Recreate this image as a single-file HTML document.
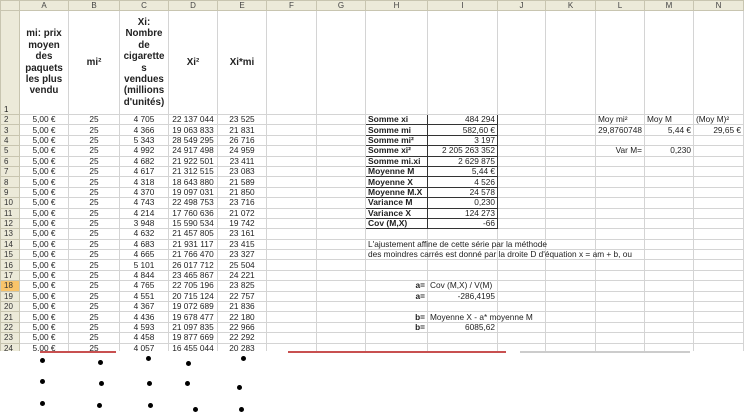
<!DOCTYPE html>
<html><head><meta charset="utf-8"><style>
*{margin:0;padding:0;box-sizing:border-box}
body{width:751px;height:409px;background:#fff;position:relative;overflow:hidden;font-family:"Liberation Sans",Arial,sans-serif;color:#222}
.wrap{position:absolute;left:0;top:0;width:751px;height:351px;overflow:hidden}
table{border-collapse:collapse;table-layout:fixed;width:743px;font-size:8.3px}
td{border:1px solid #d4d4d4;height:10.4px;line-height:9px;padding:0 2px;white-space:nowrap;overflow:visible;text-align:center}
tr.h td{background:#ecead9;border-color:#c8c5b0;height:9px;color:#444;font-size:8px}
td.rh{background:#ecead9;border-color:#c8c5b0;text-align:left;padding-left:3px;color:#333;font-size:8px}
td.sel{background:#f9c46a;}
tr.r1 td{height:104px;font-weight:bold;font-size:9.8px;line-height:11.4px;white-space:normal;vertical-align:middle;color:#222}
tr.r1 td.rh{vertical-align:bottom;font-weight:normal;font-size:8px;line-height:9px}
.r{text-align:right}.l{text-align:left}
.bx{border:1.5px solid #333!important;font-weight:bold;text-align:left;font-size:8.5px}
.bv{border:1.5px solid #333!important;text-align:right}
.dot{position:absolute;width:5px;height:5px;border-radius:50%;background:#000}
.line{position:absolute;height:2px}
</style></head><body>
<div class="wrap">
<table>
<colgroup><col style="width:19px"><col style="width:49px"><col style="width:51px"><col style="width:49px"><col style="width:49px"><col style="width:49px"><col style="width:50px"><col style="width:49px"><col style="width:62px"><col style="width:70px"><col style="width:48px"><col style="width:50px"><col style="width:49px"><col style="width:49px"><col style="width:50px"></colgroup>
<tr class="h"><td class="rh"></td><td>A</td><td>B</td><td>C</td><td>D</td><td>E</td><td>F</td><td>G</td><td>H</td><td>I</td><td>J</td><td>K</td><td>L</td><td>M</td><td>N</td></tr>
<tr class="r1"><td class="rh">1</td><td>mi: prix moyen des paquets les plus vendu</td><td>mi²</td><td>Xi: Nombre de cigarette s vendues (millions d'unités)</td><td>Xi²</td><td>Xi*mi</td><td></td><td></td><td></td><td></td><td></td><td></td><td></td><td></td><td></td></tr>
<tr><td class="rh">2</td><td>5,00 €</td><td>25</td><td>4 705</td><td>22 137 044</td><td>23 525</td><td></td><td></td><td class="bx">Somme xi</td><td class="bv">484 294</td><td></td><td></td><td class="l">Moy mi²</td><td class="l">Moy M</td><td class="l">(Moy M)²</td></tr>
<tr><td class="rh">3</td><td>5,00 €</td><td>25</td><td>4 366</td><td>19 063 833</td><td>21 831</td><td></td><td></td><td class="bx">Somme mi</td><td class="bv">582,60 €</td><td></td><td></td><td class="r">29,8760748</td><td class="r">5,44 €</td><td class="r">29,65 €</td></tr>
<tr><td class="rh">4</td><td>5,00 €</td><td>25</td><td>5 343</td><td>28 549 295</td><td>26 716</td><td></td><td></td><td class="bx">Somme mi²</td><td class="bv">3 197</td><td></td><td></td><td></td><td></td><td></td></tr>
<tr><td class="rh">5</td><td>5,00 €</td><td>25</td><td>4 992</td><td>24 917 498</td><td>24 959</td><td></td><td></td><td class="bx">Somme xi²</td><td class="bv">2 205 263 352</td><td></td><td></td><td class="r">Var M=</td><td class="r">0,230</td><td></td></tr>
<tr><td class="rh">6</td><td>5,00 €</td><td>25</td><td>4 682</td><td>21 922 501</td><td>23 411</td><td></td><td></td><td class="bx">Somme mi.xi</td><td class="bv">2 629 875</td><td></td><td></td><td></td><td></td><td></td></tr>
<tr><td class="rh">7</td><td>5,00 €</td><td>25</td><td>4 617</td><td>21 312 515</td><td>23 083</td><td></td><td></td><td class="bx">Moyenne M</td><td class="bv">5,44 €</td><td></td><td></td><td></td><td></td><td></td></tr>
<tr><td class="rh">8</td><td>5,00 €</td><td>25</td><td>4 318</td><td>18 643 880</td><td>21 589</td><td></td><td></td><td class="bx">Moyenne X</td><td class="bv">4 526</td><td></td><td></td><td></td><td></td><td></td></tr>
<tr><td class="rh">9</td><td>5,00 €</td><td>25</td><td>4 370</td><td>19 097 031</td><td>21 850</td><td></td><td></td><td class="bx">Moyenne M.X</td><td class="bv">24 578</td><td></td><td></td><td></td><td></td><td></td></tr>
<tr><td class="rh">10</td><td>5,00 €</td><td>25</td><td>4 743</td><td>22 498 753</td><td>23 716</td><td></td><td></td><td class="bx">Variance M</td><td class="bv">0,230</td><td></td><td></td><td></td><td></td><td></td></tr>
<tr><td class="rh">11</td><td>5,00 €</td><td>25</td><td>4 214</td><td>17 760 636</td><td>21 072</td><td></td><td></td><td class="bx">Variance X</td><td class="bv">124 273</td><td></td><td></td><td></td><td></td><td></td></tr>
<tr><td class="rh">12</td><td>5,00 €</td><td>25</td><td>3 948</td><td>15 590 534</td><td>19 742</td><td></td><td></td><td class="bx">Cov (M,X)</td><td class="bv">-66</td><td></td><td></td><td></td><td></td><td></td></tr>
<tr><td class="rh">13</td><td>5,00 €</td><td>25</td><td>4 632</td><td>21 457 805</td><td>23 161</td><td></td><td></td><td></td><td></td><td></td><td></td><td></td><td></td><td></td></tr>
<tr><td class="rh">14</td><td>5,00 €</td><td>25</td><td>4 683</td><td>21 931 117</td><td>23 415</td><td></td><td></td><td class="l">L'ajustement affine de cette série par la méthode</td><td></td><td></td><td></td><td></td><td></td><td></td></tr>
<tr><td class="rh">15</td><td>5,00 €</td><td>25</td><td>4 665</td><td>21 766 470</td><td>23 327</td><td></td><td></td><td class="l">des moindres carrés est donné par la droite D d'équation x = am + b, ou</td><td></td><td></td><td></td><td></td><td></td><td></td></tr>
<tr><td class="rh">16</td><td>5,00 €</td><td>25</td><td>5 101</td><td>26 017 712</td><td>25 504</td><td></td><td></td><td></td><td></td><td></td><td></td><td></td><td></td><td></td></tr>
<tr><td class="rh">17</td><td>5,00 €</td><td>25</td><td>4 844</td><td>23 465 867</td><td>24 221</td><td></td><td></td><td></td><td></td><td></td><td></td><td></td><td></td><td></td></tr>
<tr><td class="rh sel">18</td><td>5,00 €</td><td>25</td><td>4 765</td><td>22 705 196</td><td>23 825</td><td></td><td></td><td class="r"><b>a=</b></td><td class="l">Cov (M,X) / V(M)</td><td></td><td></td><td></td><td></td><td></td></tr>
<tr><td class="rh">19</td><td>5,00 €</td><td>25</td><td>4 551</td><td>20 715 124</td><td>22 757</td><td></td><td></td><td class="r"><b>a=</b></td><td class="r">-286,4195</td><td></td><td></td><td></td><td></td><td></td></tr>
<tr><td class="rh">20</td><td>5,00 €</td><td>25</td><td>4 367</td><td>19 072 689</td><td>21 836</td><td></td><td></td><td></td><td></td><td></td><td></td><td></td><td></td><td></td></tr>
<tr><td class="rh">21</td><td>5,00 €</td><td>25</td><td>4 436</td><td>19 678 477</td><td>22 180</td><td></td><td></td><td class="r"><b>b=</b></td><td class="l">Moyenne X - a* moyenne M</td><td></td><td></td><td></td><td></td><td></td></tr>
<tr><td class="rh">22</td><td>5,00 €</td><td>25</td><td>4 593</td><td>21 097 835</td><td>22 966</td><td></td><td></td><td class="r"><b>b=</b></td><td class="r">6085,62</td><td></td><td></td><td></td><td></td><td></td></tr>
<tr><td class="rh">23</td><td>5,00 €</td><td>25</td><td>4 458</td><td>19 877 669</td><td>22 292</td><td></td><td></td><td></td><td></td><td></td><td></td><td></td><td></td><td></td></tr>
<tr><td class="rh">24</td><td>5,00 €</td><td>25</td><td>4 057</td><td>16 455 044</td><td>20 283</td><td></td><td></td><td></td><td></td><td></td><td></td><td></td><td></td><td></td></tr>
</table>
</div>
<div class="line" style="left:40px;top:351px;width:76px;background:#c85050"></div>
<div class="line" style="left:288px;top:351px;width:218px;background:#c85050"></div>
<div class="line" style="left:520px;top:351px;width:170px;background:#ccc"></div>
<div class="dot" style="left:40px;top:358px"></div>
<div class="dot" style="left:98px;top:360px"></div>
<div class="dot" style="left:146px;top:356px"></div>
<div class="dot" style="left:186px;top:361px"></div>
<div class="dot" style="left:241px;top:356px"></div>
<div class="dot" style="left:40px;top:379px"></div>
<div class="dot" style="left:99px;top:381px"></div>
<div class="dot" style="left:147px;top:381px"></div>
<div class="dot" style="left:185px;top:381px"></div>
<div class="dot" style="left:237px;top:385px"></div>
<div class="dot" style="left:40px;top:401px"></div>
<div class="dot" style="left:97px;top:403px"></div>
<div class="dot" style="left:148px;top:403px"></div>
<div class="dot" style="left:193px;top:407px"></div>
<div class="dot" style="left:239px;top:407px"></div>
</body></html>
